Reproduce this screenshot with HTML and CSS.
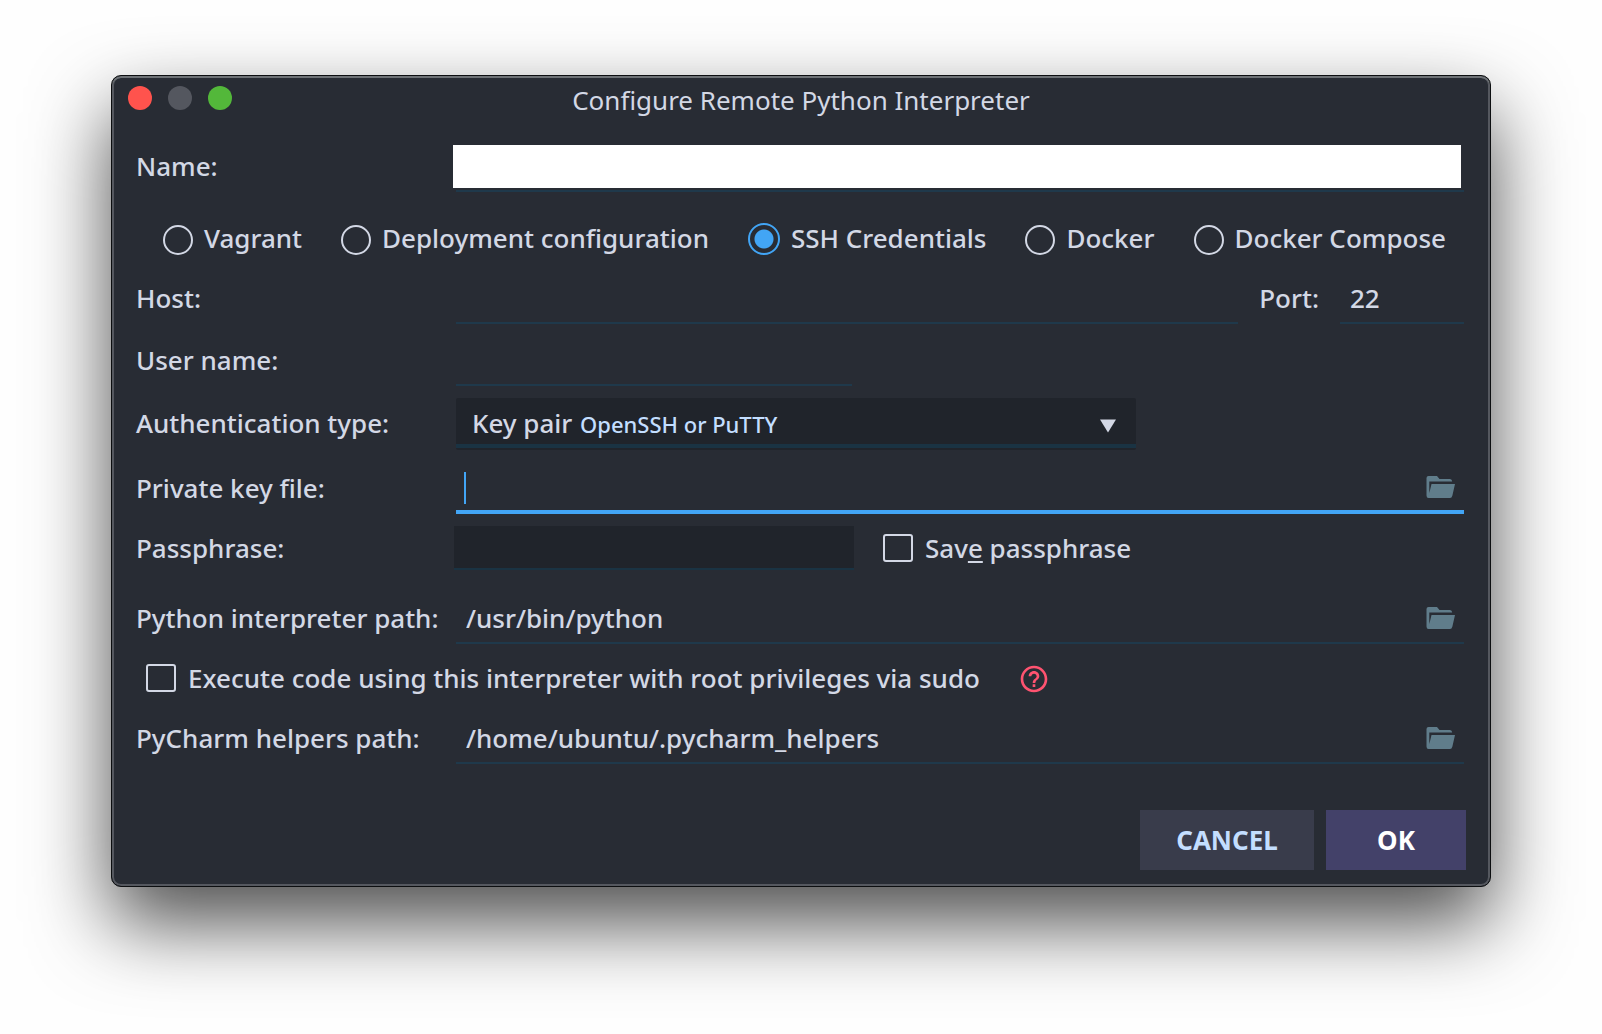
FILE: index.html
```html
<!DOCTYPE html>
<html lang="en">
<head>
<meta charset="utf-8">
<title>Configure Remote Python Interpreter</title>
<link rel="stylesheet" href="styles.css">
</head>
<body>
<svg class="sprite" aria-hidden="true">
  <symbol id="folder" viewBox="0 0 30 24">
    <path d="M0.500 20.500V3Q0.500 1 2.500 1H11L13.500 4H24Q26 4 26.200 6.500H3.300V18L5.500 9H29L26.400 20.500Q25.800 23 24 23H2.500Q0.500 23 0.500 20.500Z"/>
  </symbol>
</svg>
<main class="dialog">
  <header class="titlebar">
    <div class="lights">
      <button class="light light-close" type="button" aria-label="Close"></button>
      <button class="light light-min" type="button" aria-label="Minimize" disabled></button>
      <button class="light light-zoom" type="button" aria-label="Zoom"></button>
    </div>
    <h1 class="title">Configure Remote Python Interpreter</h1>
  </header>
  <form class="form">
    <div class="row row-first">
      <label class="label" for="name">Name:</label>
      <div class="field field-name"><input class="input" id="name" type="text"></div>
    </div>

    <div class="kinds" role="radiogroup" aria-label="Connection">
      <label class="kind"><input class="radio" type="radio" name="kind">Vagrant</label>
      <label class="kind"><input class="radio" type="radio" name="kind">Deployment configuration</label>
      <label class="kind"><input class="radio" type="radio" name="kind" checked>SSH Credentials</label>
      <label class="kind"><input class="radio" type="radio" name="kind">Docker</label>
      <label class="kind"><input class="radio" type="radio" name="kind">Docker Compose</label>
    </div>

    <div class="row">
      <label class="label" for="host">Host:</label>
      <div class="field"><input class="input" id="host" type="text"></div>
      <label class="port-label" for="port">Port:</label>
      <div class="field field-port"><input class="input" id="port" type="text" value="22"></div>
    </div>

    <div class="row row-spaced">
      <label class="label" for="user">User name:</label>
      <div class="field field-short"><input class="input" id="user" type="text"></div>
    </div>

    <div class="row row-spaced row-combo">
      <label class="label" for="auth">Authentication type:</label>
      <div class="combo">
        <select class="select" id="auth"><option>Key pair</option></select>
        <span class="combo-hint">OpenSSH or PuTTY</span>
        <svg class="combo-arrow" viewBox="0 0 16 14" aria-hidden="true"><path d="M0 0.500H16L8 13.500Z"/></svg>
      </div>
    </div>

    <div class="row row-spaced">
      <label class="label" for="key">Private key file:</label>
      <div class="field field-active">
        <input class="input" id="key" type="text">
        <span class="caret"></span>
        <button class="browse" type="button" aria-label="Browse"><svg class="folder"><use href="#folder"/></svg></button>
      </div>
    </div>

    <div class="row">
      <label class="label" for="pass">Passphrase:</label>
      <div class="field-pass"><input class="input" id="pass" type="password"></div>
      <label class="check"><input class="checkbox" type="checkbox"><span>Sav<u class="mnemonic">e</u> passphrase</span></label>
    </div>

    <div class="row row-section">
      <label class="label" for="python">Python interpreter path:</label>
      <div class="field">
        <input class="input" id="python" type="text" value="/usr/bin/python">
        <button class="browse" type="button" aria-label="Browse"><svg class="folder"><use href="#folder"/></svg></button>
      </div>
    </div>

    <div class="row row-sudo">
      <label class="check"><input class="checkbox" type="checkbox"><span>Execute code using this interpreter with root privileges via sudo</span></label>
      <button class="help" type="button" aria-label="Help">
        <svg class="help-icon" viewBox="0 0 24 24" aria-hidden="true"><path d="M11 18h2v-2h-2v2zm1-16C6.480 2 2 6.480 2 12s4.480 10 10 10 10-4.480 10-10S17.520 2 12 2zm0 18c-4.410 0-8-3.590-8-8s3.590-8 8-8 8 3.590 8 8-3.590 8-8 8zm0-14c-2.210 0-4 1.790-4 4h2c0-1.100.900-2 2-2s2 .900 2 2c0 2-3 1.750-3 5h2c0-2.250 3-2.500 3-5 0-2.210-1.790-4-4-4z"/></svg>
      </button>
    </div>

    <div class="row">
      <label class="label" for="helpers">PyCharm helpers path:</label>
      <div class="field">
        <input class="input" id="helpers" type="text" value="/home/ubuntu/.pycharm_helpers">
        <button class="browse" type="button" aria-label="Browse"><svg class="folder"><use href="#folder"/></svg></button>
      </div>
    </div>

    <footer class="actions">
      <button class="button button-cancel" type="button">CANCEL</button>
      <button class="button button-ok" type="submit">OK</button>
    </footer>
  </form>
</main>
</body>
</html>
```
FILE: styles.css
```css
:root {
  --bg: #282c34;
  --bg-dark: #20242b;
  --text: #d3d8e5;
  --line: #1f394b;
  --accent: #42a5f5;
  --hint: #c3deff;
}

* {
  box-sizing: border-box;
}

html {
  background: #fefefe;
}

body {
  min-height: 100vh;
  margin: 0;
  padding: 75px 111px 140px;
  color: var(--text);
  font: 500 26px/36px "Noto Sans", "Open Sans", sans-serif;
}

input,
select,
button {
  margin: 0;
  padding: 0;
  border: 0;
  border-radius: 0;
  outline: 0;
  background: none;
  color: inherit;
  font: inherit;
}

.sprite {
  position: absolute;
  width: 0;
  height: 0;
}

.dialog {
  padding: 2px;
  border: 1px solid #0c0e10;
  border-radius: 10px;
  background: var(--bg);
  box-shadow:
    inset 0 2px 0 #6e7276,
    inset 0 0 0 2px #55585f,
    0 36px 80px rgba(0, 0, 0, 0.7);
}

/* Title bar */

.titlebar {
  display: grid;
  grid-template-columns: 1fr auto 1fr;
  padding: 4px 14px 0;
  height: 64px;
}

.lights {
  display: flex;
  gap: 16px;
  padding-top: 4px;
}

.light {
  width: 24px;
  height: 24px;
  border-radius: 50%;
}

.light-close {
  background: #ff534d;
}

.light-min {
  background: #54575f;
}

.light-zoom {
  background: #53b83a;
}

.title {
  margin: 0;
  font-size: 26px;
  font-weight: 400;
}

/* Form rows */

.form {
  padding: 0 24px 14px 22px;
}

.row {
  display: flex;
  align-items: center;
  min-height: 50px;
  margin-top: 10px;
}

.row-first {
  margin-top: 0;
}

.row-spaced {
  margin-top: 12px;
}

.row-section {
  margin-top: 20px;
}

.row-combo {
  padding-bottom: 2px;
}

.label {
  flex: none;
  width: 320px;
  padding-bottom: 2px;
}

.field {
  position: relative;
  display: flex;
  flex: 1;
  align-items: center;
  height: 50px;
  border-bottom: 2px solid var(--line);
}

.input {
  flex: 1;
  min-width: 0;
  height: 48px;
  padding: 0 10px;
}

.field-name .input {
  height: 43px;
  margin: 0 3px 0 -3px;
  background: #fff;
  color: var(--bg);
}

.field-port {
  flex: none;
  width: 124px;
}

.port-label {
  padding: 0 21px 2px;
}

.field-short {
  flex: none;
  width: 396px;
}

.field-active {
  border-bottom: 4px solid var(--accent);
}

.caret {
  position: absolute;
  left: 8px;
  top: 8px;
  width: 2px;
  height: 32px;
  background: var(--accent);
}

.field-pass {
  display: flex;
  width: 400px;
  height: 44px;
  margin: 0 29px 2px -2px;
  border-bottom: 2px solid #1a3343;
  background: var(--bg-dark);
}

.field-pass .input {
  height: 42px;
}

/* Connection kinds */

.kinds {
  display: flex;
  align-items: center;
  justify-content: space-between;
  height: 50px;
  margin-top: 22px;
  padding: 0 18px 2px 27px;
}

.kind {
  display: flex;
  align-items: center;
  gap: 11px;
  white-space: nowrap;
}

.radio {
  appearance: none;
  width: 30px;
  height: 30px;
  margin-top: 4px;
  border: 2px solid var(--text);
  border-radius: 50%;
}

.radio:checked {
  width: 32px;
  height: 32px;
  margin-top: 2px;
  border-color: var(--accent);
  background: radial-gradient(circle, var(--accent) 9px, transparent 10px);
}

/* Authentication combo box */

.combo {
  display: grid;
  align-items: center;
  width: 680px;
  height: 52px;
  border-radius: 2px;
  background: var(--bg-dark);
}

.select,
.combo-hint,
.combo-arrow {
  grid-area: 1 / 1;
}

.select {
  align-self: start;
  appearance: none;
  width: 100%;
  height: 50px;
  padding: 4px 16px 0;
  border-bottom: 4px solid #1a3343;
}

.combo-hint {
  padding-left: 124px;
  color: var(--hint);
  font-size: 22px;
  pointer-events: none;
}

.combo-arrow {
  justify-self: end;
  width: 16px;
  height: 14px;
  margin: 4px 20px 0 0;
  fill: var(--text);
  pointer-events: none;
}

/* Check boxes, icons */

.check {
  display: flex;
  align-items: center;
  gap: 12px;
  padding-bottom: 2px;
}

.checkbox {
  appearance: none;
  width: 30px;
  height: 28px;
  border: 2px solid var(--text);
  border-radius: 3px;
}

.mnemonic {
  text-decoration-thickness: 2px;
  text-underline-offset: 3px;
}

.row-sudo {
  gap: 38px;
  padding-left: 10px;
}

.help {
  display: flex;
}

.help-icon {
  width: 32px;
  height: 32px;
  fill: #ff5370;
}

.browse {
  display: flex;
  padding: 0 8px;
}

.folder {
  width: 30px;
  height: 24px;
  fill: #607d8b;
}

/* Buttons */

.actions {
  display: flex;
  justify-content: flex-end;
  gap: 12px;
  margin: 46px -2px 0 0;
}

.button {
  height: 60px;
  font-weight: 700;
}

.button-cancel {
  width: 174px;
  background: #393c4b;
  color: var(--hint);
}

.button-ok {
  width: 140px;
  background: #434169;
  color: #fff;
}
```
